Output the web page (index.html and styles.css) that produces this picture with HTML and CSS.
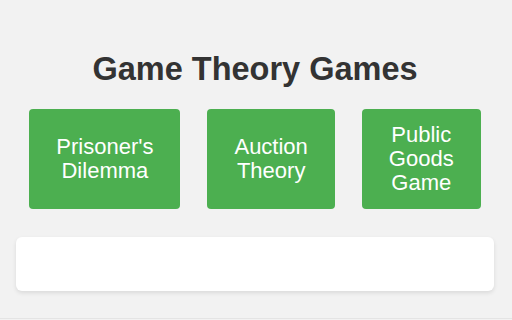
FILE: index.html
```html
<!DOCTYPE html>
<html lang="en">
<head>
    <meta charset="UTF-8">
    <meta name="viewport" content="width=device-width, initial-scale=1.0">
    <title>Game Theory Games</title>
    <link rel="stylesheet" href="styles.css">
</head>
<body>
    <div class="page">
        <h1 class="title">Game Theory Games</h1>

        <div class="game-list">
            <button class="game-button">Prisoner's Dilemma</button>
            <button class="game-button">Auction Theory</button>
            <button class="game-button">Public Goods Game</button>
        </div>

        <!-- Game area -->
        <div class="game-area" id="gameArea"></div>
    </div>
</body>
</html>
```

FILE: styles.css
```css
/* General Styles */
body {
    font-family: "Liberation Sans", Arial, sans-serif;
    background-color: #f2f2f2;
    margin: 0;
    padding: 0;
}

.page {
    height: 319px;
    border-bottom: 1px solid #e4e4e4;
    padding: 30px 18px 0 16px;
    box-sizing: border-box;
}

.title {
    color: #333;
    font-size: 32.5px;
    font-weight: bold;
    text-align: center;
    margin: 21px 0;
}

.game-list {
    display: flex;
    justify-content: center;
    gap: 27px;
}

.game-button {
    width: min-content;
    padding: 14px 27px;
    background-color: #4caf50;
    color: #fff;
    border: none;
    border-radius: 4px;
    font-family: "Liberation Sans", Arial, sans-serif;
    font-size: 22px;
    line-height: 24px;
    cursor: pointer;
}

.game-area {
    margin-top: 28px;
    height: 54px;
    background-color: #fff;
    border-radius: 6px;
    box-shadow: 0px 2px 4px rgba(0, 0, 0, 0.1);
}
```
